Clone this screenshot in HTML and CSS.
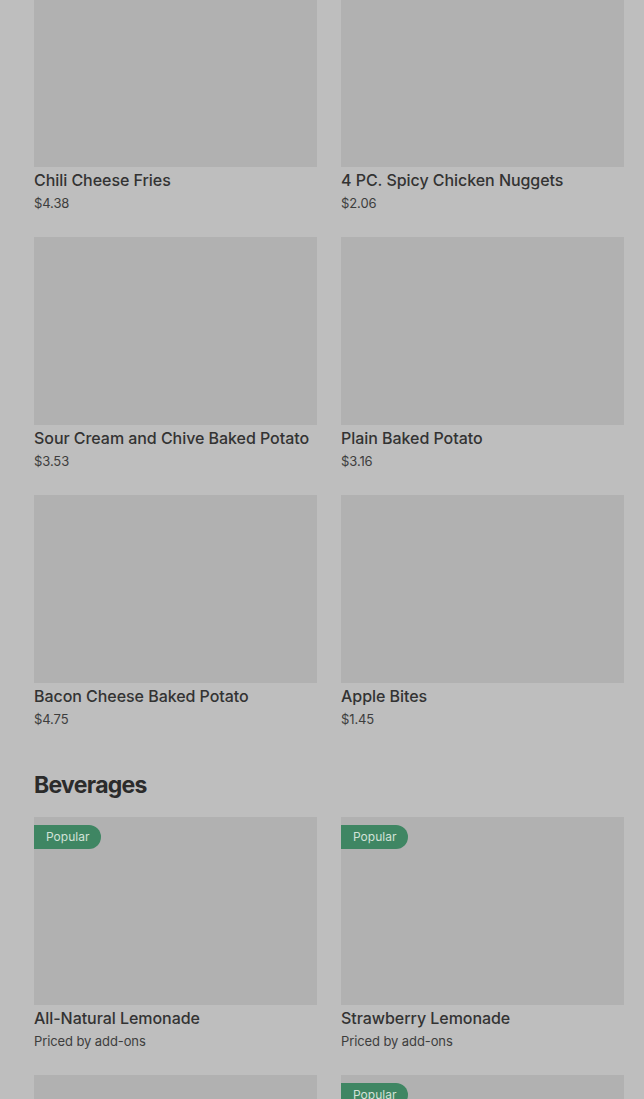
FILE: index.html
```html
<!DOCTYPE html>
<html lang="en">
<head>
  <meta charset="UTF-8" />
  <meta name="viewport" content="width=device-width, initial-scale=1.0"/>
  <title>Menu</title>
  <link rel="stylesheet" href="styles.css">
</head>
<body>

  <div class="menu">
    <div class="item-grid first">
      <div class="item">
        <div class="thumb"></div>
        <p class="name">Chili Cheese Fries</p>
        <p class="price">$4.38</p>
      </div>
      <div class="item">
        <div class="thumb"></div>
        <p class="name">4 PC. Spicy Chicken Nuggets</p>
        <p class="price">$2.06</p>
      </div>
      <div class="item">
        <div class="thumb"></div>
        <p class="name">Sour Cream and Chive Baked Potato</p>
        <p class="price">$3.53</p>
      </div>
      <div class="item">
        <div class="thumb"></div>
        <p class="name">Plain Baked Potato</p>
        <p class="price">$3.16</p>
      </div>
      <div class="item">
        <div class="thumb"></div>
        <p class="name">Bacon Cheese Baked Potato</p>
        <p class="price">$4.75</p>
      </div>
      <div class="item">
        <div class="thumb"></div>
        <p class="name">Apple Bites</p>
        <p class="price">$1.45</p>
      </div>
    </div>

    <h2 class="section-title">Beverages</h2>
    <div class="item-grid">
      <div class="item">
        <div class="thumb"><span class="badge">Popular</span></div>
        <p class="name">All-Natural Lemonade</p>
        <p class="price">Priced by add-ons</p>
      </div>
      <div class="item">
        <div class="thumb"><span class="badge">Popular</span></div>
        <p class="name">Strawberry Lemonade</p>
        <p class="price">Priced by add-ons</p>
      </div>
      <div class="item">
        <div class="thumb"></div>
      </div>
      <div class="item">
        <div class="thumb"><span class="badge">Popular</span></div>
      </div>
    </div>
  </div>

</body>
</html>
```
FILE: styles.css
```css
body {
  margin: 0;
  background: #bebebe;
  font-family: 'Inter', 'Liberation Sans', sans-serif;
  color: #2f2f2f;
  overflow: hidden;
}

.menu {
  padding: 0 20px 0 34px;
}

.item-grid {
  display: grid;
  grid-template-columns: 283px 283px;
  column-gap: 24px;
  row-gap: 24px;
}

/* page is scrolled a little */
.item-grid.first {
  margin-top: -21px;
}

.thumb {
  position: relative;
  height: 188px;
  background: #b1b1b1;
}

.badge {
  position: absolute;
  top: 8px;
  left: 0;
  height: 24px;
  line-height: 24px;
  padding: 0 12px;
  font-size: 12px;
  color: #d2e2d8;
  background: #3f8663;
  border-radius: 0 12px 12px 0;
}

.name {
  margin: 3px 0 0;
  font-size: 16px;
  font-weight: 500;
  line-height: 20px;
  letter-spacing: -0.05px;
  color: #333;
}

.price {
  margin: 3px 0 0;
  font-size: 13px;
  line-height: 20px;
  letter-spacing: -0.1px;
  color: #3d3d3d;
}

.section-title {
  margin: 40px 0 16px;
  font-size: 23px;
  font-weight: 700;
  line-height: 32px;
  letter-spacing: -0.7px;
  color: #2b2b2b;
}
```
